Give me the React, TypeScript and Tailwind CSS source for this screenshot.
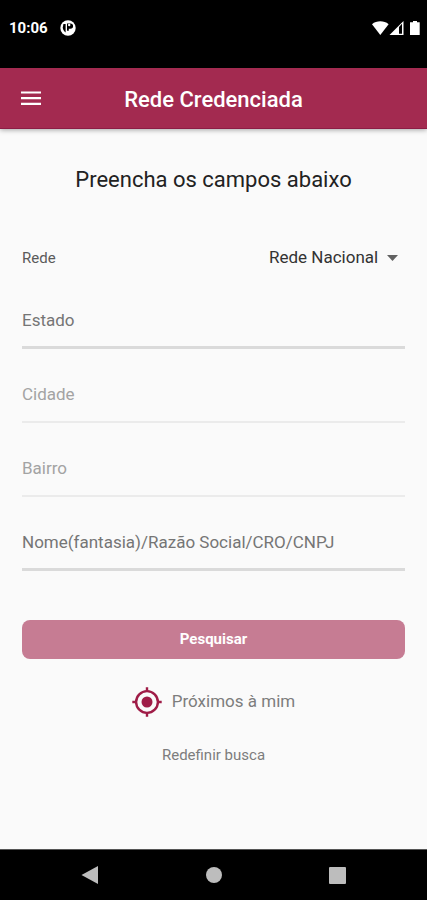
import { useState } from "react";
import type { FormEvent } from "react";

interface SearchField {
  id: string;
  label: string;
  disabled?: boolean;
}

const fields: SearchField[] = [
  { id: "estado", label: "Estado" },
  { id: "cidade", label: "Cidade", disabled: true },
  { id: "bairro", label: "Bairro", disabled: true },
  { id: "nome", label: "Nome(fantasia)/Razão Social/CRO/CNPJ" },
];

function StatusBar() {
  return (
    <div className="flex h-[68px] items-start justify-between bg-black pr-[7px] pl-[9px] pt-[18px] text-white">
      <div className="flex h-5 items-center gap-3">
        <span className="text-[15px] font-bold">10:06</span>
        <svg width="16" height="16" viewBox="0 0 16 16" aria-hidden="true">
          <circle cx="8" cy="8" r="7.7" fill="#fff" />
          <path d="M3.400 4h2.200v8.400C4 11.400 2.800 9.800 2.800 7.600z" fill="#000" />
          <path d="M7 3.400h3.400a2.700 2.700 0 0 1 0 5.400H8.800v2H7z" fill="#000" />
          <circle cx="9.200" cy="5" r="1.200" fill="#fff" />
        </svg>
      </div>
      <div className="flex h-5 items-center">
        <svg width="48" height="16" viewBox="0 0 48 16" aria-hidden="true">
          <path d="M0 4.200C4.600.4 12 .4 16.600 4.200L8.300 15z" fill="#fff" />
          <path d="M17.500 15 31.500 1v14z" fill="#fff" />
          <path d="M27 7v6.800h3V3.800z" fill="#000" />
          <path d="M41 1h4v1.200h2.700V15h-9.700V2.200H41z" fill="#fff" />
        </svg>
      </div>
    </div>
  );
}

function AppHeader() {
  return (
    <header className="relative z-10 grid h-[61px] grid-cols-[62px_1fr_62px] items-center border-b border-[#8c1c45] bg-[#a32a50] text-white shadow-[0_1px_5px_rgba(0,0,0,0.35)]">
      <button type="button" aria-label="Menu" className="flex h-full items-center justify-center">
        <svg width="20" height="14" viewBox="0 0 20 14" aria-hidden="true">
          <path d="M0 1.500h20M0 7.200h20M0 12.900h20" stroke="#fff" strokeWidth="2.200" />
        </svg>
      </button>
      <h1 className="pt-0.5 text-center text-[22px] font-medium">Rede Credenciada</h1>
    </header>
  );
}

function NavBar() {
  return (
    <nav className="flex h-[51px] items-center justify-center gap-[74px] border-t border-[#555] bg-black">
      <button type="button" aria-label="Voltar" className="flex w-[50px] justify-center">
        <svg width="18" height="18" viewBox="0 0 18 18" aria-hidden="true">
          <path d="M.5 9 17 0v18z" fill="#bdbdbd" />
        </svg>
      </button>
      <button type="button" aria-label="Início" className="flex w-[50px] justify-center">
        <svg width="16" height="16" viewBox="0 0 16 16" aria-hidden="true">
          <circle cx="8" cy="8" r="8" fill="#bdbdbd" />
        </svg>
      </button>
      <button type="button" aria-label="Recentes" className="flex w-[50px] justify-center">
        <svg width="17" height="17" viewBox="0 0 17 17" aria-hidden="true">
          <rect width="17" height="17" rx="1" fill="#bdbdbd" />
        </svg>
      </button>
    </nav>
  );
}

export default function App() {
  const [values, setValues] = useState<Record<string, string>>({});

  function handleSubmit(e: FormEvent) {
    e.preventDefault();
  }

  return (
    <div className="flex min-h-screen flex-col bg-[#fafafa] font-[Roboto,sans-serif]">
      <StatusBar />
      <AppHeader />

      <main className="flex-1 px-[22px] pt-9">
        <h2 className="text-center text-[22px] leading-[30px] text-[#222]">Preencha os campos abaixo</h2>

        <form onSubmit={handleSubmit}>
          <div className="mt-12 flex h-[30px] items-center justify-between">
            <label htmlFor="rede" className="text-[15px] text-[#5a5a5a]">
              Rede
            </label>
            <div className="relative">
              <select
                id="rede"
                className="h-[30px] appearance-none bg-transparent pr-[26px] text-[17px] text-[#333] outline-none"
              >
                <option>Rede Nacional</option>
              </select>
              <svg
                className="pointer-events-none absolute top-3 right-[7px]"
                width="11"
                height="6"
                viewBox="0 0 11 6"
                aria-hidden="true"
              >
                <path d="M0 0h11L5.500 6z" fill="#616161" />
              </svg>
            </div>
          </div>

          <div className="mt-6 flex flex-col gap-[22px]">
            {fields.map((field) => (
              <input
                key={field.id}
                id={field.id}
                type="text"
                aria-label={field.label}
                placeholder={field.label}
                disabled={field.disabled}
                value={values[field.id] ?? ""}
                onChange={(e) => setValues({ ...values, [field.id]: e.target.value })}
                className="block h-[52px] w-full border-b-3 border-[#dadada] bg-transparent pb-1 text-[17px] text-[#333] outline-none placeholder:text-[#757575] disabled:border-b-2 disabled:border-[#ebebeb] disabled:placeholder:text-[#a3a3a3]"
              />
            ))}
          </div>

          <button
            type="submit"
            className="mt-[49px] block h-[39px] w-full rounded-lg bg-[#c67c93] text-[15px] font-bold text-white"
          >
            Pesquisar
          </button>
        </form>

        <div className="mt-7 flex flex-col items-center">
          <button type="button" className="flex h-[30px] items-center gap-[10px] text-[17px] text-[#7d7d7d]">
            <svg width="30" height="30" viewBox="0 0 30 30" fill="none" aria-hidden="true">
              <circle cx="15" cy="15" r="10.900" stroke="#9f1c47" strokeWidth="2.400" />
              <circle cx="15" cy="15" r="5.500" fill="#9f1c47" />
              <path d="M15 .3v4M15 25.700v4M.3 15h4M25.700 15h4" stroke="#9f1c47" strokeWidth="2.400" />
            </svg>
            Próximos à mim
          </button>
          <button type="button" className="mt-[23px] h-[30px] text-[15px] text-[#7d7d7d]">
            Redefinir busca
          </button>
        </div>
      </main>

      <NavBar />
    </div>
  );
}
